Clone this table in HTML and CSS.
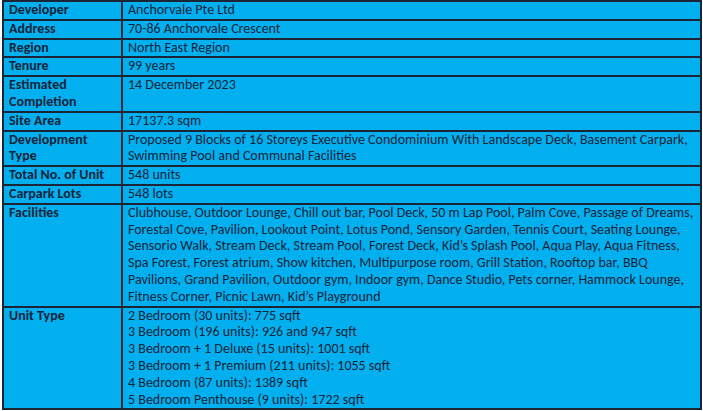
FILE: index.html
```html
<!DOCTYPE html>
<html>
<head>
<meta charset="utf-8">
<link rel="stylesheet" href="styles.css">
</head>
<body>
<table class="info">
  <tr><th>Developer</th><td>Anchorvale Pte Ltd</td></tr>
  <tr><th>Address</th><td>70-86 Anchorvale Crescent</td></tr>
  <tr><th>Region</th><td>North East Region</td></tr>
  <tr><th>Tenure</th><td>99 years</td></tr>
  <tr><th>Estimated Completion</th><td>14 December 2023</td></tr>
  <tr><th>Site Area</th><td>17137.3 sqm</td></tr>
  <tr><th>Development Type</th><td>Proposed 9 Blocks of 16 Storeys Executive Condominium With Landscape Deck, Basement Carpark, Swimming Pool and Communal Facilities</td></tr>
  <tr><th>Total No. of Unit</th><td>548 units</td></tr>
  <tr><th>Carpark Lots</th><td>548 lots</td></tr>
  <tr><th>Facilities</th><td>Clubhouse, Outdoor Lounge, Chill out bar, Pool Deck, 50 m Lap Pool, Palm Cove, Passage of Dreams, Forestal Cove, Pavilion, Lookout Point, Lotus Pond, Sensory Garden, Tennis Court, Seating Lounge, Sensorio Walk, Stream Deck, Stream Pool, Forest Deck, Kid’s Splash Pool, Aqua Play, Aqua Fitness, Spa Forest, Forest atrium, Show kitchen, Multipurpose room, Grill Station, Rooftop bar, BBQ Pavilions, Grand Pavilion, Outdoor gym, Indoor gym, Dance Studio, Pets corner, Hammock Lounge, Fitness Corner, Picnic Lawn, Kid’s Playground</td></tr>
  <tr><th>Unit Type</th><td>2 Bedroom (30 units): 775 sqft<br>3 Bedroom (196 units): 926 and 947 sqft<br>3 Bedroom + 1 Deluxe (15 units): 1001 sqft<br>3 Bedroom + 1 Premium (211 units): 1055 sqft<br>4 Bedroom (87 units): 1389 sqft<br>5 Bedroom Penthouse (9 units): 1722 sqft</td></tr>
</table>
</body>
</html>
```
FILE: styles.css
```css
html, body {
  margin: 0;
  padding: 0;
  background: #ffffff;
}
.info {
  border-collapse: collapse;
  width: 700px;
  margin: 0 0 0 2px;
  background: #02b0ef;
  color: #15243a;
  font-family: Carlito, Calibri, Lato, sans-serif;
  font-size: 14px;
  line-height: 16.8px;
  table-layout: fixed;
}
.info th, .info td {
  border: 2px solid #1a2638;
  padding: 0 4px 0 5px;
  vertical-align: top;
  text-align: left;
}
.info th {
  width: 108px;
  font-weight: bold;
}
```
